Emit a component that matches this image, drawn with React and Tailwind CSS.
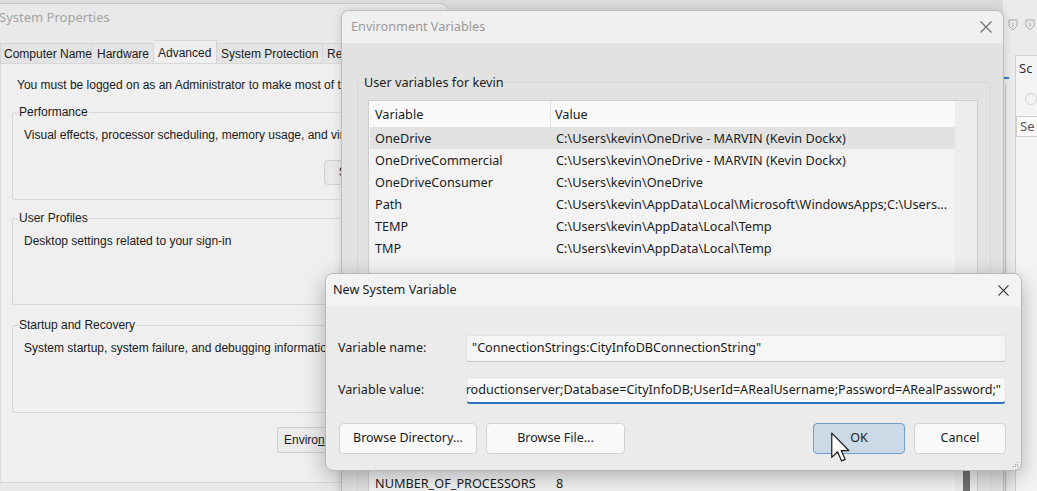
import React from "react";

const ui = "font-['Noto_Sans',sans-serif]";
const classic = "font-['Liberation_Sans',Arial,sans-serif]";

const userVars = [
  ["OneDrive", "C:\\Users\\kevin\\OneDrive - MARVIN (Kevin Dockx)"],
  ["OneDriveCommercial", "C:\\Users\\kevin\\OneDrive - MARVIN (Kevin Dockx)"],
  ["OneDriveConsumer", "C:\\Users\\kevin\\OneDrive"],
  ["Path", "C:\\Users\\kevin\\AppData\\Local\\Microsoft\\WindowsApps;C:\\Users..."],
  ["TEMP", "C:\\Users\\kevin\\AppData\\Local\\Temp"],
  ["TMP", "C:\\Users\\kevin\\AppData\\Local\\Temp"],
];

const systemVars = [
  ["ComSpec", "C:\\WINDOWS\\system32\\cmd.exe"],
  ["DriverData", "C:\\Windows\\System32\\Drivers\\DriverData"],
  ["MSMPI_BENCHMARKS", "C:\\Program Files\\Microsoft MPI\\Benchmarks\\"],
  ["MSMPI_BIN", "C:\\Program Files\\Microsoft MPI\\Bin\\"],
  ["NUMBER_OF_PROCESSORS", "8"],
];

const CloseIcon = ({ size = 12, color = "#5a5a5a" }) => (
  <svg width={size} height={size} viewBox="0 0 12 12">
    <path d="M0.5 0.5 L11.5 11.5 M11.5 0.5 L0.5 11.5" stroke={color} strokeWidth="1.1" fill="none" />
  </svg>
);

// legend sits on the border; padding goes on the inner div so the legend stays put
const GroupBox = ({ label, className, inner, children }) => (
  <fieldset className={`border border-[#d6d6d6] rounded-[2px] ${className}`}>
    <legend className="ml-[5px] px-[1px]">{label}</legend>
    <div className={inner}>{children}</div>
  </fieldset>
);

const VarList = ({ rows, selected, className, thumbTop }) => (
  <div className={`flex border border-[#cdcdcd] bg-[#f3f3f3] text-[12.7px] text-[#1c1c1c] ${className}`}>
    <div className="w-[586px] overflow-hidden">
      <div className="flex h-[26px] items-center bg-[#f9f9f9]">
        <div className="w-[182px] h-full flex items-center pl-[6px] border-r border-[#e2e2e2]">Variable</div>
        <div className="pl-[4px]">Value</div>
      </div>
      {rows.map(([name, value], i) => (
        <div
          key={name}
          className={`flex h-[22px] items-center ml-[1px] ${i === selected ? "bg-[#e2e2e2]" : ""}`}
        >
          <div className="w-[181px] pl-[5px] whitespace-nowrap overflow-hidden">{name}</div>
          <div className="pl-[5px] whitespace-nowrap">{value}</div>
        </div>
      ))}
    </div>
    <div className="flex-1 bg-[#ededed] flex flex-col">
      {thumbTop ? (
        <div className="flex-1 flex justify-center" style={{ paddingTop: thumbTop }}>
          <div className="w-[7px] bg-[#707070] rounded-t-[3px]" />
        </div>
      ) : null}
    </div>
  </div>
);

const Btn = ({ className, children }) => (
  <div
    className={`flex items-center justify-center rounded-[4px] border text-[12.5px] text-[#1b1b1b] ${className}`}
  >
    {children}
  </div>
);

const PinIcon = () => (
  <svg width="12" height="14" viewBox="0 0 12 14">
    <path d="M2 2 H10 V8 L6 12 L2 8 Z M6 5 V9" stroke="#a9a9a9" fill="none" strokeWidth="1" />
  </svg>
);

function BackgroundApp() {
  return (
    <div className="absolute left-[1003px] top-0 w-[34px] h-full bg-[#ebebeb] flex">
      <div className="w-[15px] flex flex-col">
        <div className="h-[77px]" />
        <div className="h-[2px] w-[6px] bg-[#2b7cd3]" />
        <div className="ml-[2px] mt-[6px] flex-1 w-[1px] bg-[#c4c4c4]" />
      </div>
      <div className="flex-1 flex flex-col">
        <div className="h-[55px] flex items-start pt-[18px] gap-[5px] ml-[-8px]">
          <PinIcon />
          <PinIcon />
        </div>
        <div className={`flex-1 border-l border-t border-[#d0d0d0] bg-[#f4f4f4] ${ui}`}>
          <div className="h-[26px] flex items-center pl-[3px] text-[13px] text-[#333]">Sc</div>
          <div className="h-[34px] flex items-center pl-[9px]">
            <div className="w-[12px] h-[12px] rounded-full border border-[#cfcfcf]" />
          </div>
          <div className="h-[21px] border-y border-l border-[#cfcfcf] bg-[#fafafa] pl-[3px] text-[13px] text-[#555] flex items-center">
            Se
          </div>
        </div>
      </div>
    </div>
  );
}

function SystemProperties() {
  return (
    <div
      className={`absolute left-[-6px] top-[3px] w-[455px] h-[500px] rounded-tr-[8px] border border-[#c4c4c4] bg-[#e9e9e9] text-[12px] text-[#1a1a1a] ${classic}`}
    >
      <div className={`h-[27px] flex items-center pl-[4px] text-[13px] text-[#a3a3a3] ${ui}`}>System Properties</div>
      <div className="h-[32px] flex items-end pl-[5px] whitespace-nowrap">
        <div className="w-[92px] h-[20px] flex items-center pl-[3px] border border-b-0 border-[#d4d4d4] bg-[#e4e4e4]">Computer Name</div>
        <div className="w-[62px] h-[20px] flex items-center pl-[5px] border border-b-0 border-l-0 border-[#d4d4d4] bg-[#e4e4e4]">Hardware</div>
        <div className="w-[63px] h-[23px] flex items-start pt-[3px] pl-[4px] border border-b-0 border-l-0 border-[#d4d4d4] bg-[#efefef]">Advanced</div>
        <div className="w-[106px] h-[20px] flex items-center pl-[4px] border border-b-0 border-l-0 border-[#d4d4d4] bg-[#e4e4e4]">System Protection</div>
        <div className="w-[60px] h-[20px] flex items-center pl-[4px] border border-b-0 border-l-0 border-[#d4d4d4] bg-[#e4e4e4]">Remote</div>
      </div>
      <div className="ml-[5px] mr-[5px] h-[420px] border border-[#d8d8d8] bg-[#efefef] px-[11px] pt-[12px] flex flex-col">
        <div className="pl-[5px] whitespace-nowrap">You must be logged on as an Administrator to make most of these changes.</div>
        <GroupBox label="Performance" className="mt-[9px] h-[97px]" inner="px-[11px]">
          <div className="mt-[5px] whitespace-nowrap">Visual effects, processor scheduling, memory usage, and virtual memory</div>
          <div className="mt-[16px] flex justify-end pr-[10px]">
            <Btn className="w-[85px] h-[25px] border-[#cfcfcf] bg-[#e8e8e8]">Settings...</Btn>
          </div>
        </GroupBox>
        <GroupBox label="User Profiles" className="mt-[9px] h-[96px]" inner="px-[11px]">
          <div className="mt-[5px] whitespace-nowrap">Desktop settings related to your sign-in</div>
        </GroupBox>
        <GroupBox label="Startup and Recovery" className="mt-[11px] h-[97px]" inner="px-[11px]">
          <div className="mt-[5px] whitespace-nowrap">System startup, system failure, and debugging information</div>
        </GroupBox>
        <div className="mt-[14px] flex justify-end pr-[1px]">
          <div className="h-[26px] w-[153px] flex items-center pl-[6px] border border-[#cdcdcd] bg-[#ebebeb] rounded-[2px] whitespace-nowrap">
            Enviro<span className="underline">n</span>ment Variables...
          </div>
        </div>
      </div>
    </div>
  );
}

function EnvironmentVariables() {
  return (
    <div
      className={`absolute left-[341px] top-[10px] w-[663px] h-[500px] rounded-t-[8px] border border-[#bdbdbd] bg-[#e2e2e2] overflow-hidden shadow-[0_0_10px_rgba(0,0,0,0.15)] text-[12.7px] text-[#1c1c1c] ${ui}`}
    >
      <div className="h-[32px] bg-[#f0f0f0] flex items-center justify-between pl-[9px]">
        <span className="text-[#9a9a9a]">Environment Variables</span>
        <div className="w-[34px] h-full flex items-center justify-center">
          <CloseIcon size={12} color="#6a6a6a" />
        </div>
      </div>
      <div className="pl-[15px] pr-[12px] pt-[30px]">
        <GroupBox label="User variables for kevin" className="h-[256px]" inner="pl-[10px] pr-[12px]">
          <VarList rows={userVars} selected={0} className="mt-[8px] h-[190px]" />
        </GroupBox>
        <GroupBox label="System variables" className="mt-[6px] h-[200px]" inner="pl-[10px] pr-[12px]">
          <VarList rows={systemVars} className="mt-[3px] h-[160px]" thumbTop={110} />
        </GroupBox>
      </div>
    </div>
  );
}

function NewSystemVariable() {
  return (
    <div
      className={`absolute left-[325px] top-[273px] w-[697px] h-[198px] rounded-[8px] border border-[#b8b8b8] bg-[#ebebeb] overflow-hidden shadow-[0_6px_22px_rgba(0,0,0,0.28)] text-[12.6px] text-[#1b1b1b] ${ui}`}
    >
      <div className="h-[32px] bg-[#f3f3f3] flex items-center justify-between pl-[7px]">
        <span>New System Variable</span>
        <div className="w-[36px] h-full flex items-center justify-center">
          <CloseIcon size={11} color="#2a2a2a" />
        </div>
      </div>
      <div className="pl-[12px] pr-[15px] pt-[29px]">
        <div className="flex items-center h-[27px]">
          <div className="w-[128px]">Variable name:</div>
          <div className="flex-1 h-full flex items-center pl-[5px] rounded-[4px] bg-[#f6f6f6] border border-[#e2e2e2] border-b-[#c4c4c4] whitespace-nowrap overflow-hidden">
            "ConnectionStrings:CityInfoDBConnectionString"
          </div>
        </div>
        <div className="flex items-center h-[27px] mt-[15px]">
          <div className="w-[128px]">Variable value:</div>
          <div className="flex-1 h-full flex items-center justify-end pr-[4px] rounded-[4px] bg-[#f8f8f8] border border-[#e2e2e2] border-b-2 border-b-[#2f72c0] whitespace-nowrap overflow-hidden">
            <span>roductionserver;Database=CityInfoDB;UserId=ARealUsername;Password=ARealPassword;"</span>
          </div>
        </div>
        <div className="flex items-center mt-[19px] pl-[1px]">
          <Btn className="w-[138px] h-[31px] border-[#d2d2d2] bg-[#f9f9f9]">Browse Directory...</Btn>
          <Btn className="ml-[9px] w-[139px] h-[31px] border-[#d2d2d2] bg-[#f9f9f9]">Browse File...</Btn>
          <div className="flex-1" />
          <Btn className="w-[92px] h-[31px] border-[#6f9dcc] bg-[#ccd9e6]">OK</Btn>
          <Btn className="ml-[9px] w-[92px] h-[31px] border-[#d2d2d2] bg-[#f9f9f9]">Cancel</Btn>
        </div>
      </div>
      <svg className="absolute right-[2px] bottom-[2px]" width="8" height="8" viewBox="0 0 8 8">
        <rect x="6" y="2" width="1" height="1" fill="#9a9a9a" />
        <rect x="4" y="4" width="1" height="1" fill="#9a9a9a" />
        <rect x="6" y="4" width="1" height="1" fill="#9a9a9a" />
        <rect x="2" y="6" width="1" height="1" fill="#9a9a9a" />
        <rect x="4" y="6" width="1" height="1" fill="#9a9a9a" />
        <rect x="6" y="6" width="1" height="1" fill="#9a9a9a" />
      </svg>
    </div>
  );
}

const Cursor = () => (
  <svg className="absolute left-[831px] top-[432px]" width="19" height="31" viewBox="0 0 12.5 20">
    <path
      d="M0.5 0.5 L0.5 16.5 L4.3 12.8 L7 18.8 L9.3 17.8 L6.7 12 L11.7 12 Z"
      fill="#ffffff"
      stroke="#1a1a1a"
      strokeWidth="0.8"
      strokeLinejoin="round"
    />
  </svg>
);

export default function App() {
  return (
    <div className="relative w-[1037px] h-[491px] overflow-hidden bg-[#dcdcdc]">
      <BackgroundApp />
      <SystemProperties />
      <EnvironmentVariables />
      <NewSystemVariable />
      <Cursor />
    </div>
  );
}
